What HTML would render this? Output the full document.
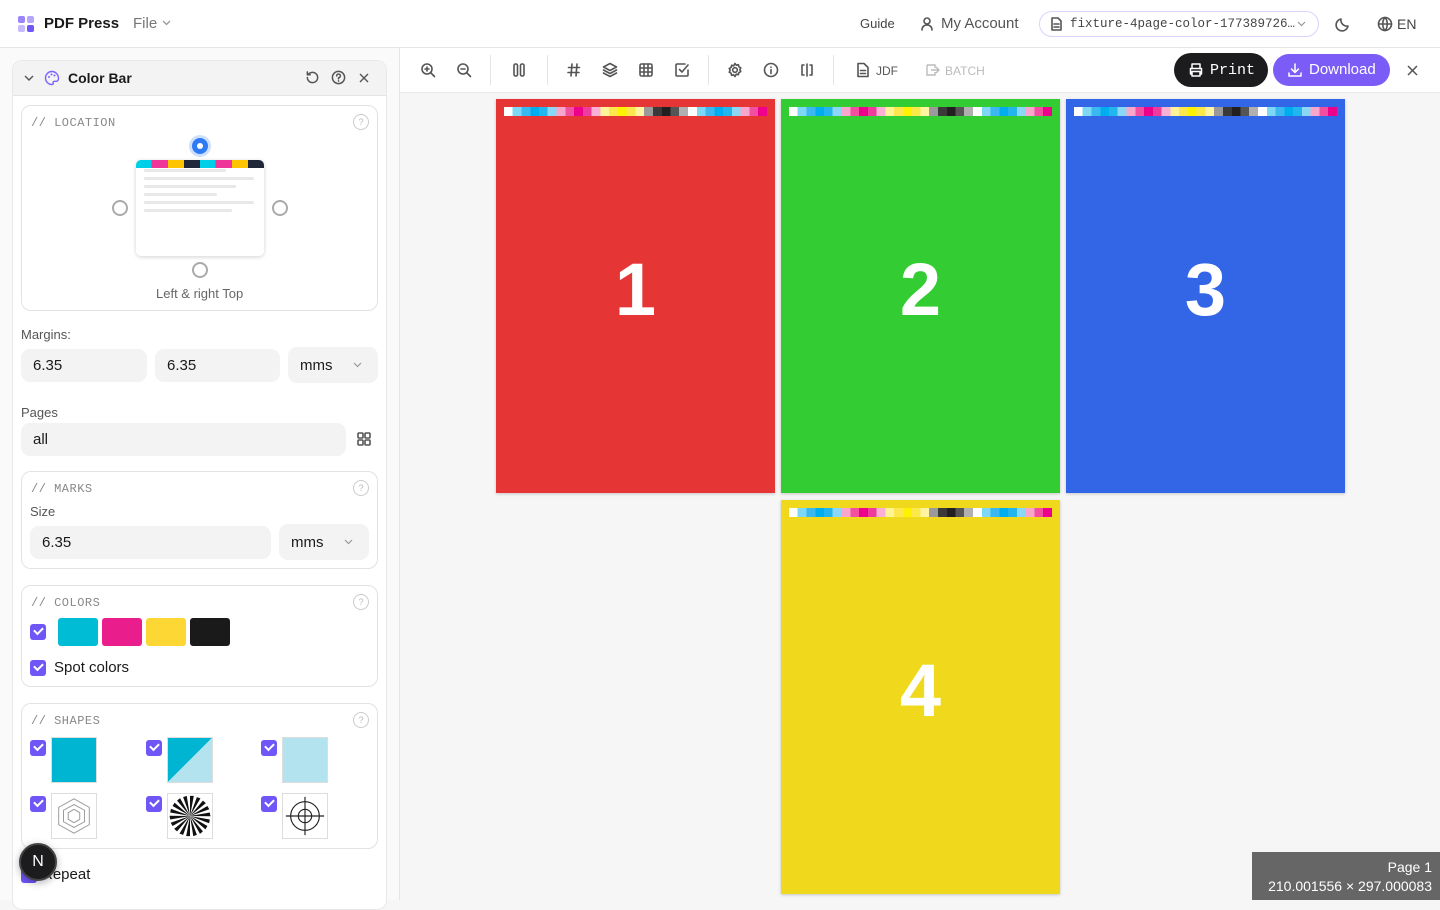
<!DOCTYPE html>
<html><head><meta charset="utf-8"><style>
*{box-sizing:border-box;margin:0;padding:0}
body{width:1440px;height:900px;overflow:hidden;font-family:"Liberation Sans",sans-serif;background:#f6f6f6;position:relative;color:#1a1a1a}
.a{position:absolute}
.mono{font-family:"Liberation Mono",monospace}
.top{left:0;top:0;width:1440px;height:48px;background:#fff;border-bottom:1px solid #e5e5e5}
.side{left:0;top:48px;width:400px;height:852px;background:#fafafa;border-right:1px solid #e5e5e5}
.card{border:1px solid #e2e2e2;border-radius:10px;background:#fff}
.lbl{font-size:12px;color:#888;letter-spacing:.5px}
.q{width:16px;height:16px;border:1px solid #ccc;border-radius:50%;font-size:9px;color:#bbb;text-align:center;line-height:14px}
.inp{background:#f3f3f3;border-radius:9px;font-size:15px;padding-left:12px;display:flex;align-items:center}
.cb{width:16px;height:16px;background:#6e56f7;border-radius:3px}
.cb:after{content:"";position:absolute;left:4px;top:3px;width:7px;height:4px;border-left:2px solid #fff;border-bottom:2px solid #fff;transform:rotate(-45deg)}
.page{width:279px;height:394px;box-shadow:0 1px 3px rgba(0,0,0,.2)}
.num{position:absolute;left:0;right:0;top:153px;text-align:center;color:#fff;font-weight:bold;font-size:74px;line-height:76px}
.bar{position:absolute;left:8px;right:8px;top:8px;height:9px;background:linear-gradient(90deg,#fff 0 3.3%,#7dd8f5 3.3% 6.6%,#3cb8f0 6.6% 10%,#00aeef 10% 13.3%,#22b5ee 13.3% 16.6%,#8ad8f5 16.6% 20%,#f9a6cc 20% 23.3%,#f34fa0 23.3% 26.6%,#ec008c 26.6% 30%,#ef3c9c 30% 33.3%,#f9b0d4 33.3% 36.6%,#fff39a 36.6% 40%,#fde74c 40% 43.3%,#fff200 43.3% 46.6%,#fbe84a 46.6% 50%,#fff5a0 50% 53.3%,#9a9a9a 53.3% 56.6%,#3a3a3a 56.6% 60%,#231f20 60% 63.3%,#555 63.3% 66.6%,#b0b0b0 66.6% 70%,#fff 70% 73.3%,#7dd8f5 73.3% 76.6%,#3cb8f0 76.6% 80%,#00aeef 80% 83.3%,#22b5ee 83.3% 86.6%,#8ad8f5 86.6% 90%,#f9a6cc 90% 93.3%,#f34fa0 93.3% 96.6%,#ec008c 96.6% 100%)}
.ic{stroke:#555;fill:none;stroke-width:1.6;stroke-linecap:round;stroke-linejoin:round}
.sep{width:1px;height:30px;background:#e5e5e5;top:55px}
.radio{width:16px;height:16px;border:2px solid #aaa;border-radius:50%;background:#fff}
</style></head><body>
<div class="a top"></div>
<div class="a" style="left:18px;top:16px;width:17px;height:17px">
<div class="a" style="left:0;top:0;width:7px;height:7px;background:#9b85fa;border-radius:2px"></div>
<div class="a" style="left:9px;top:0;width:7px;height:7px;background:#b6a6fb;border-radius:2px"></div>
<div class="a" style="left:0;top:9px;width:7px;height:7px;background:#c6b9fc;border-radius:2px"></div>
<div class="a" style="left:9px;top:9px;width:7px;height:7px;background:#6e56f7;border-radius:2px"></div></div>
<div class="a" style="left:44px;top:15px;font-size:15px;font-weight:bold">PDF Press</div>
<div class="a" style="left:133px;top:15px;font-size:15px;color:#777">File</div>
<svg class="a" style="left:162px;top:20px" width="9" height="6" viewBox="0 0 9 6"><path d="M1 1l3.5 3.5L8 1" fill="none" stroke="#999" stroke-width="1.3"/></svg>
<div class="a" style="left:860px;top:16px;font-size:13px;color:#444">Guide</div>
<svg class="a" style="left:919px;top:16px" width="16" height="16" viewBox="0 0 16 16"><circle class="ic" cx="8" cy="5" r="3"/><path class="ic" d="M3 14c0-3 2-5 5-5s5 2 5 5"/></svg>
<div class="a" style="left:941px;top:15px;font-size:15px;color:#555">My Account</div>
<div class="a" style="left:1039px;top:11px;width:280px;height:26px;border:1px solid #d9d3fb;border-radius:13px"></div>
<svg class="a" style="left:1050px;top:17px" width="13" height="14" viewBox="0 0 13 14"><path class="ic" d="M2 1h6l3 3v9H2zM4 7h5M4 10h5"/></svg>
<div class="a mono" style="left:1070px;top:17px;font-size:12.5px;color:#444">fixture-4page-color-177389726…</div>
<svg class="a" style="left:1297px;top:21px" width="9" height="6" viewBox="0 0 9 6"><path d="M1 1l3.5 3.5L8 1" fill="none" stroke="#999" stroke-width="1.2"/></svg>
<svg class="a" style="left:1335px;top:16px" width="16" height="16" viewBox="0 0 16 16"><path class="ic" d="M13 10A6 6 0 0 1 6 3a6 6 0 1 0 7 7z"/></svg>
<svg class="a" style="left:1377px;top:16px" width="16" height="16" viewBox="0 0 16 16"><circle class="ic" cx="8" cy="8" r="6.5"/><path class="ic" d="M1.5 8h13M8 1.5c-3 3-3 10 0 13M8 1.5c3 3 3 10 0 13"/></svg>
<div class="a" style="left:1397px;top:16px;font-size:14px;color:#444">EN</div>

<div class="a side"></div>
<div class="a" style="left:12px;top:60px;width:375px;height:850px;background:#fff;border:1px solid #e8e8e8;border-radius:10px"></div>
<div class="a" style="left:13px;top:61px;width:373px;height:35px;background:#f3f3f3;border-radius:10px 10px 0 0;border-bottom:1px solid #e5e5e5"></div>
<svg class="a" style="left:24px;top:75px" width="10" height="6" viewBox="0 0 10 6"><path d="M1 1l4 4 4-4" fill="none" stroke="#555" stroke-width="1.4"/></svg>
<svg class="a" style="left:44px;top:70px" width="16" height="16" viewBox="0 0 16 16"><path d="M8 1.5a6.5 6.5 0 0 0 0 13c1 0 1.5-.6 1.2-1.4-.4-1 .2-1.8 1.2-1.8H12a2.5 2.5 0 0 0 2.5-2.5C14.5 4.5 11.6 1.5 8 1.5z" fill="none" stroke="#7b61ff" stroke-width="1.4"/><circle cx="5" cy="7" r="1" fill="#7b61ff"/><circle cx="7.5" cy="4.5" r="1" fill="#7b61ff"/><circle cx="10.5" cy="5.5" r="1" fill="#7b61ff"/></svg>
<div class="a" style="left:68px;top:70px;font-size:14px;font-weight:bold">Color Bar</div>
<svg class="a" style="left:305px;top:70px" width="15" height="15" viewBox="0 0 16 16"><path class="ic" d="M2.5 8A5.5 5.5 0 1 0 4 4.2M2.5 2v3h3"/></svg>
<svg class="a" style="left:331px;top:70px" width="15" height="15" viewBox="0 0 16 16"><circle class="ic" cx="8" cy="8" r="6.5"/><path class="ic" d="M6 6.3a2 2 0 1 1 2 2v1.2M8 11.5v.3"/></svg>
<svg class="a" style="left:359px;top:73px" width="10" height="10" viewBox="0 0 10 10"><path d="M1 1l8 8M9 1L1 9" stroke="#555" stroke-width="1.4"/></svg>

<div class="a card" style="left:21px;top:105px;width:357px;height:206px"></div>
<div class="a lbl mono" style="left:31px;top:116px">// LOCATION</div>
<div class="a q" style="left:353px;top:114px">?</div>
<div class="a" style="left:192px;top:138px;width:16px;height:16px;border-radius:50%;background:#2f7bf6;box-shadow:0 0 0 3px #cfe0fd"><div class="a" style="left:5px;top:5px;width:6px;height:6px;background:#fff;border-radius:50%"></div></div>
<div class="a" style="left:136px;top:160px;width:128px;height:96px;background:#fff;border-radius:5px;box-shadow:0 1px 4px rgba(0,0,0,.18);overflow:hidden">
<div style="height:8px;background:linear-gradient(90deg,#00cfe8 0 12%,#f0359a 12% 25%,#fdc400 25% 37.5%,#1e2838 37.5% 50%,#00cfe8 50% 62%,#f0359a 62% 75%,#fdc400 75% 87.5%,#1e2838 87.5%)"></div>
<div class="a" style="left:8px;top:9px;width:82px;height:3px;background:#e8e8e8;border-radius:2px"></div>
<div class="a" style="left:8px;top:17px;width:110px;height:3px;background:#e8e8e8;border-radius:2px"></div>
<div class="a" style="left:8px;top:25px;width:92px;height:3px;background:#e8e8e8;border-radius:2px"></div>
<div class="a" style="left:8px;top:33px;width:73px;height:3px;background:#e8e8e8;border-radius:2px"></div>
<div class="a" style="left:8px;top:41px;width:110px;height:3px;background:#e8e8e8;border-radius:2px"></div>
<div class="a" style="left:8px;top:49px;width:88px;height:3px;background:#e8e8e8;border-radius:2px"></div></div>
<div class="a radio" style="left:112px;top:200px"></div>
<div class="a radio" style="left:272px;top:200px"></div>
<div class="a radio" style="left:192px;top:262px"></div>
<div class="a" style="left:156px;top:286px;font-size:13px;color:#666">Left &amp; right Top</div>

<div class="a" style="left:21px;top:327px;font-size:13px;color:#555">Margins:</div>
<div class="a inp" style="left:21px;top:349px;width:126px;height:33px">6.35</div>
<div class="a inp" style="left:155px;top:349px;width:125px;height:33px">6.35</div>
<div class="a inp" style="left:288px;top:347px;width:90px;height:36px">mms</div>
<svg class="a" style="left:353px;top:362px" width="9" height="6" viewBox="0 0 9 6"><path d="M1 1l3.5 3.5L8 1" fill="none" stroke="#999" stroke-width="1.2"/></svg>
<div class="a" style="left:21px;top:405px;font-size:13px;color:#555">Pages</div>
<div class="a inp" style="left:21px;top:423px;width:325px;height:33px">all</div>
<svg class="a" style="left:357px;top:432px" width="14" height="14" viewBox="0 0 14 14"><rect class="ic" x="1" y="1" width="5" height="5" rx="1" stroke-width="1.2"/><rect class="ic" x="8" y="1" width="5" height="5" rx="1" stroke-width="1.2"/><rect class="ic" x="1" y="8" width="5" height="5" rx="1" stroke-width="1.2"/><rect class="ic" x="8" y="8" width="5" height="5" rx="1" stroke-width="1.2"/></svg>

<div class="a card" style="left:21px;top:471px;width:357px;height:98px"></div>
<div class="a lbl mono" style="left:31px;top:482px">// MARKS</div>
<div class="a q" style="left:353px;top:480px">?</div>
<div class="a" style="left:30px;top:504px;font-size:13px;color:#555">Size</div>
<div class="a inp" style="left:30px;top:526px;width:241px;height:33px">6.35</div>
<div class="a inp" style="left:279px;top:524px;width:90px;height:36px">mms</div>
<svg class="a" style="left:344px;top:539px" width="9" height="6" viewBox="0 0 9 6"><path d="M1 1l3.5 3.5L8 1" fill="none" stroke="#999" stroke-width="1.2"/></svg>

<div class="a card" style="left:21px;top:585px;width:357px;height:102px"></div>
<div class="a lbl mono" style="left:31px;top:596px">// COLORS</div>
<div class="a q" style="left:353px;top:594px">?</div>
<div class="a cb" style="left:30px;top:624px"></div>
<div class="a" style="left:58px;top:618px;width:40px;height:28px;background:#00bcd4;border-radius:3px"></div>
<div class="a" style="left:102px;top:618px;width:40px;height:28px;background:#e91e8c;border-radius:3px"></div>
<div class="a" style="left:146px;top:618px;width:40px;height:28px;background:#fdd835;border-radius:3px"></div>
<div class="a" style="left:190px;top:618px;width:40px;height:28px;background:#1a1a1a;border-radius:3px"></div>
<div class="a cb" style="left:30px;top:660px"></div>
<div class="a" style="left:54px;top:659px;font-size:15px">Spot colors</div>

<div class="a card" style="left:21px;top:703px;width:357px;height:146px"></div>
<div class="a lbl mono" style="left:31px;top:714px">// SHAPES</div>
<div class="a q" style="left:353px;top:712px">?</div>
<div class="a cb" style="left:30px;top:740px"></div><div class="a cb" style="left:146px;top:740px"></div><div class="a cb" style="left:261px;top:740px"></div>
<div class="a cb" style="left:30px;top:796px"></div><div class="a cb" style="left:146px;top:796px"></div><div class="a cb" style="left:261px;top:796px"></div>
<div class="a" style="left:51px;top:737px;width:46px;height:46px;background:#00b5d1;border:1px solid #ddd"></div>
<div class="a" style="left:167px;top:737px;width:46px;height:46px;background:linear-gradient(135deg,#00b5d1 50%,#b2e3ee 50%);border:1px solid #ddd"></div>
<div class="a" style="left:282px;top:737px;width:46px;height:46px;background:#b2e3ee;border:1px solid #ddd"></div>
<svg class="a" style="left:51px;top:793px;border:1px solid #ddd;background:#fff" width="46" height="46" viewBox="0 0 46 46"><g fill="none" stroke="#999"><polygon points="23,5 39,14 39,32 23,41 7,32 7,14"/><polygon points="23,11 34,17 34,29 23,35 12,29 12,17"/><polygon points="23,16 29,19.5 29,26.5 23,30 17,26.5 17,19.5"/></g></svg>
<svg class="a" style="left:167px;top:793px;border:1px solid #ddd;background:#fff" width="46" height="46" viewBox="0 0 46 46"><g fill="#111"><path d="M23 23L23 2L27 2Z"/><path d="M23 23L23 2L27 2Z" transform="rotate(20 23 23)"/><path d="M23 23L23 2L27 2Z" transform="rotate(40 23 23)"/><path d="M23 23L23 2L27 2Z" transform="rotate(60 23 23)"/><path d="M23 23L23 2L27 2Z" transform="rotate(80 23 23)"/><path d="M23 23L23 2L27 2Z" transform="rotate(100 23 23)"/><path d="M23 23L23 2L27 2Z" transform="rotate(120 23 23)"/><path d="M23 23L23 2L27 2Z" transform="rotate(140 23 23)"/><path d="M23 23L23 2L27 2Z" transform="rotate(160 23 23)"/><path d="M23 23L23 2L27 2Z" transform="rotate(180 23 23)"/><path d="M23 23L23 2L27 2Z" transform="rotate(200 23 23)"/><path d="M23 23L23 2L27 2Z" transform="rotate(220 23 23)"/><path d="M23 23L23 2L27 2Z" transform="rotate(240 23 23)"/><path d="M23 23L23 2L27 2Z" transform="rotate(260 23 23)"/><path d="M23 23L23 2L27 2Z" transform="rotate(280 23 23)"/><path d="M23 23L23 2L27 2Z" transform="rotate(300 23 23)"/><path d="M23 23L23 2L27 2Z" transform="rotate(320 23 23)"/><path d="M23 23L23 2L27 2Z" transform="rotate(340 23 23)"/></g></svg>
<svg class="a" style="left:282px;top:793px;border:1px solid #ddd;background:#fff" width="46" height="46" viewBox="0 0 46 46"><g fill="none" stroke="#222" stroke-width="1.2"><circle cx="23" cy="23" r="15"/><circle cx="23" cy="23" r="7"/><path d="M3 23h40M23 3v40"/></g></svg>
<div class="a cb" style="left:21px;top:867px"></div>
<div class="a" style="left:42px;top:866px;font-size:15px">Repeat</div>
<div class="a" style="left:19px;top:843px;width:38px;height:38px;border-radius:50%;background:#1c1c1e;border:2px solid #444;color:#fff;font-size:16px;text-align:center;line-height:34px;box-shadow:0 2px 8px rgba(0,0,0,.3)">N</div>

<div class="a" style="left:400px;top:48px;width:1040px;height:45px;background:#fff;border-bottom:1px solid #e8e8e8"></div>
<svg class="a" style="left:420px;top:62px" width="16" height="16" viewBox="0 0 16 16"><circle class="ic" cx="7" cy="7" r="5"/><path class="ic" d="M11 11l3.5 3.5M5 7h4M7 5v4"/></svg>
<svg class="a" style="left:456px;top:62px" width="16" height="16" viewBox="0 0 16 16"><circle class="ic" cx="7" cy="7" r="5"/><path class="ic" d="M11 11l3.5 3.5M5 7h4"/></svg>
<div class="a sep" style="left:490px"></div>
<svg class="a" style="left:511px;top:62px" width="16" height="16" viewBox="0 0 16 16"><rect class="ic" x="3" y="2" width="3.5" height="12" rx="1.5"/><rect class="ic" x="9.5" y="2" width="3.5" height="12" rx="1.5"/></svg>
<div class="a sep" style="left:547px"></div>
<svg class="a" style="left:566px;top:62px" width="16" height="16" viewBox="0 0 16 16"><path class="ic" d="M6 2l-1 12M11 2l-1 12M2.5 5.5h11M2 10.5h11"/></svg>
<svg class="a" style="left:602px;top:62px" width="16" height="16" viewBox="0 0 16 16"><path class="ic" d="M8 1.5l6.5 3.5L8 8.5 1.5 5zM1.5 8L8 11.5 14.5 8M1.5 11L8 14.5 14.5 11"/></svg>
<svg class="a" style="left:638px;top:62px" width="16" height="16" viewBox="0 0 16 16"><rect class="ic" x="2" y="2" width="12" height="12" rx="1.5"/><path class="ic" d="M2 6h12M2 10h12M6 2v12M10 2v12"/></svg>
<svg class="a" style="left:674px;top:62px" width="16" height="16" viewBox="0 0 16 16"><path class="ic" d="M14 8v5a1 1 0 0 1-1 1H3a1 1 0 0 1-1-1V3a1 1 0 0 1 1-1h8M5.5 7.5L8 10l6-7"/></svg>
<div class="a sep" style="left:708px"></div>
<svg class="a" style="left:727px;top:62px" width="16" height="16" viewBox="0 0 16 16"><circle class="ic" cx="8" cy="8" r="2.3"/><path class="ic" d="M8 1.5l1.3 1.7 2.1-.5.5 2.1 1.9 1-1 1.9 1 1.9-1.9 1-.5 2.1-2.1-.5L8 14.5l-1.3-1.7-2.1.5-.5-2.1-1.9-1 1-1.9-1-1.9 1.9-1 .5-2.1 2.1.5z"/></svg>
<svg class="a" style="left:763px;top:62px" width="16" height="16" viewBox="0 0 16 16"><circle class="ic" cx="8" cy="8" r="6.5"/><path class="ic" d="M8 7.5v4M8 5v.2"/></svg>
<svg class="a" style="left:799px;top:62px" width="16" height="16" viewBox="0 0 16 16"><path class="ic" d="M5 3H3v10h2M11 3h2v10h-2M8 2v12"/></svg>
<div class="a sep" style="left:833px"></div>
<svg class="a" style="left:856px;top:62px" width="14" height="16" viewBox="0 0 14 16"><path class="ic" d="M2 1.5h6l4 4v9H2zM4.5 8.5h5M4.5 11.5h5"/></svg>
<div class="a" style="left:876px;top:64px;font-size:12px;color:#555">JDF</div>
<svg class="a" style="left:925px;top:62px" width="16" height="16" viewBox="0 0 16 16"><path d="M2 3h8v3M2 3v10h8v-3M6 8h8M11 5l3 3-3 3" fill="none" stroke="#bbb" stroke-width="1.4"/></svg>
<div class="a" style="left:945px;top:64px;font-size:12px;color:#bbb">BATCH</div>
<div class="a" style="left:1174px;top:53px;width:94px;height:34px;background:#1c1c1e;border-radius:17px;color:#fff;font-size:15px;line-height:34px;padding-left:36px"><span style="font-family:'Liberation Mono',monospace">Print</span></div>
<svg class="a" style="left:1188px;top:62px" width="16" height="16" viewBox="0 0 16 16"><path d="M4 6V2h8v4M4 12H2.5V6.5h11V12H12M4 9.5h8V14H4z" fill="none" stroke="#fff" stroke-width="1.5" stroke-linejoin="round"/></svg>
<div class="a" style="left:1273px;top:54px;width:117px;height:32px;background:#7b5cf7;border-radius:16px;color:#fff;font-size:15px;line-height:32px;padding-left:36px">Download</div>
<svg class="a" style="left:1287px;top:62px" width="16" height="16" viewBox="0 0 16 16"><path d="M8 2v8M4.5 7L8 10.5 11.5 7M2 11v3h12v-3" fill="none" stroke="#fff" stroke-width="1.5" stroke-linecap="round" stroke-linejoin="round"/></svg>
<svg class="a" style="left:1407px;top:65px" width="11" height="11" viewBox="0 0 11 11"><path d="M1 1l9 9M10 1L1 10" stroke="#555" stroke-width="1.5"/></svg>

<div class="a page" style="left:496px;top:99px;background:#e53535"><div class="bar"></div><div class="num">1</div></div>
<div class="a page" style="left:781px;top:99px;background:#33cc33"><div class="bar"></div><div class="num">2</div></div>
<div class="a page" style="left:1066px;top:99px;background:#3366e6"><div class="bar"></div><div class="num">3</div></div>
<div class="a page" style="left:781px;top:500px;background:#f0d91c"><div class="bar"></div><div class="num">4</div></div>

<div class="a" style="left:1252px;top:852px;width:188px;height:48px;background:#666;color:#fff;font-size:14px;text-align:right;padding:6px 8px 0 0;line-height:19px">Page 1<br>210.001556 × 297.000083</div>
</body></html>
